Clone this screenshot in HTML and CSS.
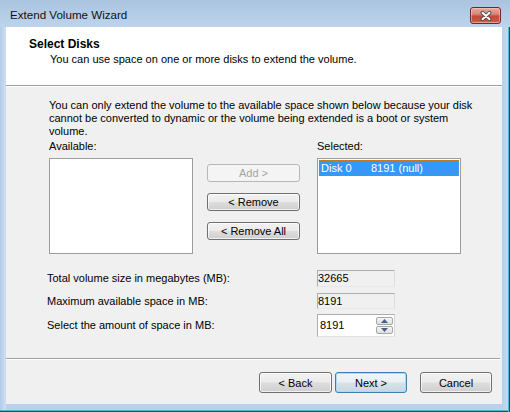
FILE: index.html
```html
<!DOCTYPE html>
<html>
<head>
<meta charset="utf-8">
<title>Extend Volume Wizard</title>
<link rel="stylesheet" href="styles.css">
</head>
<body>
<div class="window">
  <div class="titlebar">
    <span class="title">Extend Volume Wizard</span>
    <button class="close" aria-label="Close">
      <svg width="14" height="10" viewBox="0 0 14 10">
        <path d="M3.5 1.8 L10.5 8.2 M10.5 1.8 L3.5 8.2" stroke="#4a4a4a" stroke-width="3.8" stroke-linecap="round" fill="none"/>
        <path d="M3.5 1.8 L10.5 8.2 M10.5 1.8 L3.5 8.2" stroke="#ffffff" stroke-width="2" stroke-linecap="round" fill="none"/>
      </svg>
    </button>
  </div>
  <div class="client">
    <div class="header">
      <div class="h-title">Select Disks</div>
      <div class="h-sub">You can use space on one or more disks to extend the volume.</div>
    </div>
    <div class="body">
      <p class="note">You can only extend the volume to the available space shown below because your disk<br>cannot be converted to dynamic or the volume being extended is a boot or system<br>volume.</p>
      <div class="picker">
        <div class="lbl">Available:</div>
        <div></div>
        <div class="lbl">Selected:</div>
        <div class="listbox"></div>
        <div class="movers">
          <button class="btn disabled">Add &gt;</button>
          <button class="btn">&lt; Remove</button>
          <button class="btn">&lt; Remove All</button>
        </div>
        <div class="listbox">
          <div class="item sel"><span class="c1">Disk 0</span><span>8191 (null)</span></div>
        </div>
      </div>
      <div class="fields">
        <div class="frow r1"><span class="flbl">Total volume size in megabytes (MB):</span><div class="field ro">32665</div></div>
        <div class="frow r2"><span class="flbl">Maximum available space in MB:</span><div class="field ro">8191</div></div>
        <div class="frow r3"><span class="flbl">Select the amount of space in MB:</span>
          <div class="field spin">
            <span class="val">8191</span>
            <div class="spinbtns">
              <div class="sb"><svg width="7" height="4" viewBox="0 0 7 4"><path d="M0 4 L3.5 0 L7 4 Z" fill="#4b5f84"/></svg></div>
              <div class="sb"><svg width="7" height="4" viewBox="0 0 7 4"><path d="M0 0 L3.5 4 L7 0 Z" fill="#4b5f84"/></svg></div>
            </div>
          </div>
        </div>
      </div>
    </div>
    <div class="footer">
      <button class="btn fbtn back">&lt; Back</button>
      <button class="btn fbtn next">Next &gt;</button>
      <button class="btn fbtn cancel">Cancel</button>
    </div>
  </div>
</div>
</body>
</html>
```

FILE: styles.css
```css
* { box-sizing: border-box; }
html, body { margin: 0; padding: 0; }
body {
  width: 510px;
  height: 412px;
  overflow: hidden;
  font-family: "Liberation Sans", Arial, sans-serif;
  font-size: 11px;
  color: #000;
  background: #b9d1ea;
}
.window {
  width: 510px;
  height: 412px;
  display: flex;
  flex-direction: column;
  background: linear-gradient(90deg, #b3cce8 0px, #c4d8ee 4px, #d6e4f3 5px, #b9d1ea 6px, #b9d1ea 503px, #c2d6ec 506px);
  box-shadow: inset -1px 0 #1f4f62, inset -2px 0 #4fb8d6, inset 0 -1px #1f4f62, inset 0 -2px #4fb8d6;
}
.titlebar {
  height: 27px;
  flex: none;
  display: flex;
  justify-content: space-between;
  align-items: flex-start;
  background: linear-gradient(#aac3df, #bed4ec);
  padding: 8px 9px 0 10px;
}
.title {
  font-size: 11.6px;
  line-height: 14px;
  color: #111;
}
.close {
  width: 31px;
  height: 17px;
  margin-top: -1px;
  padding: 0;
  border: 1px solid #6b2a22;
  border-radius: 3px;
  background: linear-gradient(#e7a89d 0%, #d8897c 40%, #c24c3c 55%, #c6553f 85%, #d27462 100%);
  box-shadow: inset 0 0 0 1px rgba(255,220,210,0.45);
  display: flex;
  align-items: center;
  justify-content: center;
}
.client {
  flex: none;
  height: 377px;
  margin: 0 8px 0 6px;
  background: #f0f0f0;
  display: flex;
  flex-direction: column;
}
.header {
  flex: none;
  height: 59px;
  background: #fff;
  border-bottom: 1px solid #a0a0a0;
  padding-top: 10px;
}
.h-title {
  font-weight: bold;
  font-size: 12px;
  line-height: 15px;
  padding-left: 23px;
}
.h-sub {
  line-height: 15px;
  padding-left: 44px;
}
.body {
  flex: none;
  height: 272px;
  box-shadow: inset 0 1px #ffffff;
  padding-left: 43px;
  padding-top: 13px;
}
.note {
  margin: 0;
  line-height: 13px;
  white-space: nowrap;
}
.picker {
  margin-top: 2px;
  width: 412px;
  display: grid;
  grid-template-columns: 144px 1fr 144px;
  grid-template-rows: 13px 96px;
  row-gap: 5px;
}
.lbl { line-height: 13px; }
.listbox {
  background: #fff;
  border: 1px solid #9c9c9c;
  padding: 1px;
}
.item {
  height: 16px;
  line-height: 14px;
  padding-left: 2px;
  display: flex;
  color: #fff;
}
.item.sel {
  background: #3399ff;
  border: 1px dotted #cc7a22;
  padding-left: 1px;
  line-height: 13px;
  padding-top: 1px;
}
.c1 { width: 50px; }
.movers {
  padding: 6px 0 0 14px;
  display: flex;
  flex-direction: column;
  gap: 11px;
}
.btn {
  font-family: "Liberation Sans", Arial, sans-serif;
  font-size: 11px;
  color: #000;
  border: 1px solid #707070;
  border-radius: 3px;
  background: linear-gradient(#f2f2f2 0%, #ebebeb 48%, #dddddd 52%, #cfcfcf 100%);
  box-shadow: inset 0 0 0 1px rgba(255,255,255,0.7);
  padding: 0;
  display: flex;
  align-items: center;
  justify-content: center;
}
.movers .btn { width: 93px; height: 18px; }
.btn.disabled {
  color: #a3a3a3;
  border-color: #b5b8ba;
  background: #f4f4f4;
  box-shadow: none;
}
.fields {
  margin-top: 16px;
  display: flex;
  flex-direction: column;
}
.frow {
  display: flex;
  align-items: center;
  margin-left: -2px;
}
.r1 { height: 17px; }
.r2 { height: 16px; margin-top: 6px; }
.r3 { height: 23px; margin-top: 5px; }
.flbl {
  width: 270px;
  line-height: 13px;
}
.field {
  width: 78px;
  height: 100%;
  border: 1px solid #b0b0b0;
  display: flex;
  align-items: center;
  line-height: 13px;
}
.field.ro {
  background: #f0f0f0;
  border-color: #adadad #dedede #e8e8e8 #adadad;
  padding-left: 0;
}
.field.spin {
  background: #fff;
  border-color: #adadad #d6d6d6 #e3e3e3 #adadad;
  padding: 1px 1px 1px 2px;
  justify-content: space-between;
}
.spinbtns {
  width: 17px;
  height: 100%;
  display: flex;
  flex-direction: column;
  gap: 1px;
  padding: 1px 0;
}
.sb {
  flex: 1;
  border: 1px solid #a7a7a7;
  border-radius: 2px;
  background: linear-gradient(#f6f6f6, #e0e0e0);
  display: flex;
  align-items: center;
  justify-content: center;
}
.footer {
  flex: 1;
  border-top: 1px solid #a0a0a0;
  box-shadow: inset 0 1px #ffffff;
  margin-right: 2px;
  padding: 13px 8px 0 0;
  display: flex;
  justify-content: flex-end;
  align-items: flex-start;
}
.fbtn { height: 21px; width: 72px; }
.back { width: 73px; }
.next {
  margin-left: 3px;
  border-color: #3c7fb1;
  box-shadow: inset 0 0 0 1px #a6def6;
  background: linear-gradient(#f2f6f9 0%, #e9eff3 48%, #d8e2e9 52%, #cbd6de 100%);
}
.cancel { margin-left: 13px; }
```
